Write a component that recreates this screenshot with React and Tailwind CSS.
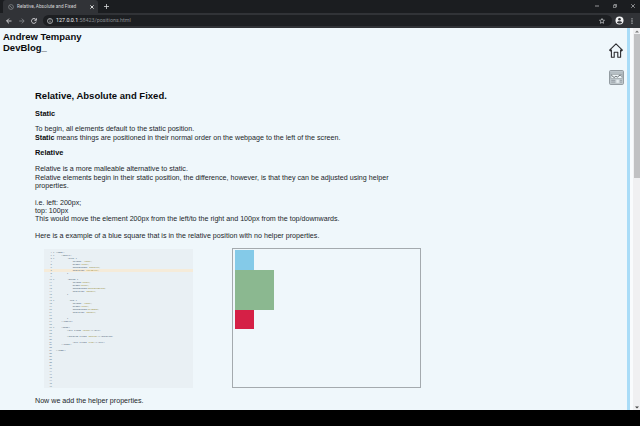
import React from "react";

const CODE = [
  [0, "<html>"],
  [4, "<style>"],
  [8, ".blue {"],
  [12, "height:", " 100px;"],
  [12, "width:", "100px;"],
  [12, "background:", " skyblue;"],
  [12, "position:", " relative;"],
  [8, "}"],
  null,
  [8, ".green {"],
  [12, "height:", "200px;"],
  [12, "width:", "200px;"],
  [12, "background:", "darkseagreen;"],
  [12, "position:", " static;"],
  [8, "}"],
  null,
  [9, ".red {"],
  [12, "height:", " 100px;"],
  [12, "width:", "100px;"],
  [12, "background:", "crimson;"],
  [12, "position:", " static;"],
  null,
  [8, "}"],
  [4, "</style>"],
  null,
  [4, "<body>"],
  [8, "<div class=", '"blue"', "></div>"],
  null,
  [8, "<section class=", '"green"', "></section>"],
  null,
  [12, "<div class=", '"red"', "></div>"],
  [4, "</body>"],
  null,
  [0, "</html>"],
];
const FOLDS = [1, 2, 3, 10, 17, 26];
const ROWS = Array.from({ length: 46 }, (_, i) => CODE[i] || null);

function CodeListing() {
  return (
    <div className="w-[149px] h-[139px] bg-[#e9f0f4] mt-[0.5px] pt-[2.5px] overflow-hidden font-['Liberation_Mono',monospace] text-[2.32px] leading-[2.98px]">
      {ROWS.map((row, i) => (
        <div key={i} className={`flex h-[2.98px] whitespace-pre ${i === 6 ? "bg-[#f5ebd9]" : ""}`}>
          <span className="w-[8px] text-right text-[#566f83]">{i + 1}</span>
          <span className="w-[4px] pl-[1px] text-[#566f83]">{FOLDS.includes(i + 1) ? "▾" : ""}</span>
          {row && (
            <span className="text-[#2c455a]">
              {" ".repeat(row[0])}
              {row[1]}
              <span className="text-[#8d7c10]">{row[2]}</span>
              {row[3]}
            </span>
          )}
        </div>
      ))}
    </div>
  );
}

function HomeIcon() {
  return (
    <svg width="14" height="15" viewBox="0 0 14 15" fill="none" stroke="#2b2b2f" strokeWidth="1.1" strokeLinejoin="round">
      <path d="M.6 7.1 7 .8l6.4 6.3-.8.8-1-.9v7.3H8.8V9.2H5.2v5.1H2.4V7l-1 .9z" />
    </svg>
  );
}

function BlogIcon() {
  return (
    <svg width="15" height="15" viewBox="0 0 15 15" fill="none">
      <rect x=".6" y=".6" width="13.8" height="13.8" rx=".8" fill="#c3ccd1" stroke="#8c949a" />
      <path d="M1 3h13" stroke="#959ea4" strokeWidth=".6" />
      <rect x="2" y="4.3" width="11" height="4.4" fill="#edf4f7" stroke="#7a8288" strokeWidth=".5" />
      <path d="m2.3 5.2 2.8 2.3 1.8-1.2 1.5.8 2.8-2.2 1.5 1.6" stroke="#4c5358" strokeWidth=".8" />
      <path d="M2.2 10.3h4M2.2 12.1h4M11 10.3h2M11 12.1h2" stroke="#828a90" strokeWidth=".7" />
      <rect x="7.4" y="9.8" width="2.4" height="3" fill="#e6edf0" />
    </svg>
  );
}

function Browser() {
  return (
    <header className="font-['Roboto','Noto_Sans',sans-serif]">
      <div className="flex h-[13px] bg-[#1b1d20] items-stretch">
        <div className="ml-[3px] w-[95px] bg-[#313337] rounded-t-[3px] flex items-center pl-[5px] pr-[4px]">
          <svg width="6" height="6" viewBox="0 0 6 6" fill="none" stroke="#777a7e" strokeWidth=".9">
            <circle cx="3" cy="3" r="2.4" />
            <path d="m1.3 1.3 3.4 3.4" />
          </svg>
          <span className="ml-[3px] w-[70px] whitespace-nowrap text-[4.75px] leading-[8px] text-[#d5d7da]">Relative, Absolute and Fixed</span>
          <svg className="ml-auto" width="4" height="4" viewBox="0 0 4 4" stroke="#eee" strokeWidth=".9">
            <path d="m.4.4 3.2 3.2M3.6.4.4 3.6" />
          </svg>
        </div>
        <div className="flex items-center pl-[6px]">
          <svg width="5" height="5" viewBox="0 0 5 5" stroke="#d4d6d8" strokeWidth=".8">
            <path d="M2.5 0v5M0 2.5h5" />
          </svg>
        </div>
        <div className="ml-auto flex items-center gap-[14px] pr-[5px] pb-[2px]">
          <svg width="4" height="4" viewBox="0 0 4 4" stroke="#c8c9cb" strokeWidth=".7"><path d="M0 2h4" /></svg>
          <svg width="4" height="4" viewBox="0 0 4 4" fill="none" stroke="#c8c9cb" strokeWidth=".6">
            <path d="M.4 1.2h2.4v2.4H.4zM1.3 1V.4h2.3v2.3H3" />
          </svg>
          <svg width="4" height="4" viewBox="0 0 4 4" stroke="#d8d9db" strokeWidth=".6"><path d="m.2.2 3.6 3.6M3.8.2.2 3.8" /></svg>
        </div>
      </div>
      <div className="flex h-[15px] bg-[#313337] items-center pl-[6px] pr-[4px]">
        <svg width="31" height="6" viewBox="0 0 31 6" fill="none" strokeWidth=".9">
          <path d="M5.5 3H.7M3 .6.6 3 3 5.4" stroke="#dcdde0" />
          <path d="M13.2 3H18M15.8.6 18.2 3l-2.4 2.4" stroke="#808388" />
          <path d="M29.8 1.5A2.4 2.4 0 1 0 30.2 3.6M30.4.3v2h-2" stroke="#dcdde0" />
        </svg>
        <div className="ml-[6px] mr-[-1px] flex-1 h-[11px] rounded-full bg-[#1d1f22] flex items-center pl-[4px] pr-[5px]">
          <svg width="6" height="6" viewBox="0 0 6 6" fill="none" stroke="#d6d8da" strokeWidth=".7">
            <circle cx="3" cy="3" r="2.5" />
            <path d="M3 1.3v.8M3 2.6v2" />
          </svg>
          <span className="ml-[3px] w-[75px] whitespace-nowrap text-[5.35px] leading-[9px] text-[#868a8e]">
            <span className="text-[#f0f1f2]">127.0.0.1</span>:58423/positions.html
          </span>
          <svg className="ml-auto mr-[2px]" width="6" height="6" viewBox="0 0 6 6" fill="none" stroke="#d0d2d5" strokeWidth=".7">
            <path d="m3 .5.75 1.6 1.75.2-1.3 1.2.35 1.8L3 4.4l-1.55.9.35-1.8L.5 2.3l1.75-.2z" />
          </svg>
        </div>
        <svg className="ml-[4px]" width="9" height="9" viewBox="0 0 9 9">
          <circle cx="4.5" cy="4.5" r="4" fill="#f1f2f3" />
          <circle cx="4.5" cy="3.3" r="1.3" fill="#303236" />
          <path d="M2 6.4c.7-1.4 4.3-1.4 5 0-.9 1.3-4.1 1.3-5 0" fill="#303236" />
        </svg>
        <svg className="ml-[7px] mr-[3px]" width="2" height="6" viewBox="0 0 2 6" fill="#d6d8da">
          <circle cx="1" cy=".8" r=".65" /><circle cx="1" cy="3" r=".65" /><circle cx="1" cy="5.2" r=".65" />
        </svg>
      </div>
    </header>
  );
}

export default function App() {
  return (
    <div className="w-[640px] h-[426px] overflow-hidden bg-black">
      <Browser />
      <div className="flex h-[382px] bg-[#eff7fb] font-['Liberation_Sans',Arial,sans-serif] text-[#22262a]">
        <main className="w-[600px] text-[7.13px] leading-[8.33px]">
          <h1 className="pl-[3px] pt-[3px] text-[9.5px] leading-[11px] font-bold text-[#0a0b0d]">
            Andrew Tempany<br />DevBlog_
          </h1>
          <div className="pl-[35px] whitespace-nowrap">
            <h2 className="mt-[37px] text-[9.53px] leading-[11px] h-[11px] font-bold text-[#0a0b0d]">Relative, Absolute and Fixed.</h2>
            <h3 className="mt-[8.5px] text-[7.4px] font-bold text-[#0a0b0d]">Static</h3>
            <p className="mt-[7.5px]">
              To begin, all elements default to the static position.<br />
              <b className="text-[#0a0b0d]">Static</b> means things are positioned in their normal order on the webpage to the left of the screen.
            </p>
            <h3 className="mt-[7.5px] text-[7.4px] font-bold text-[#0a0b0d]">Relative</h3>
            <p className="mt-[7.5px]">
              Relative is a more malleable alternative to static.<br />
              Relative elements begin in their static position, the difference, however, is that they can be adjusted using helper<br />
              properties.<br /><br />
              i.e. left: 200px;<br />
              top: 100px<br />
              This would move the element 200px from the left/to the right and 100px from the top/downwards.<br /><br />
              Here is a example of a blue square that is in the relative position with no helper properties.
            </p>
            <div className="mt-[8.2px] flex h-[140px] pl-[9px]">
              <CodeListing />
              <div className="ml-[39.4px] w-[188.5px] h-[140px] border border-[#a4aaae] pl-[1.2px] pt-[1px]">
                <div className="w-[19.7px] h-[19.7px] bg-[#84cae8]" />
                <div className="w-[39.4px] h-[39.4px] bg-[#8bb890]" />
                <div className="w-[19.7px] h-[19.7px] bg-[#d52046]" />
              </div>
            </div>
            <p className="mt-[9px]">Now we add the helper properties.</p>
          </div>
        </main>
        <nav className="w-[27px] flex flex-col items-center pt-[15px] gap-[12px] pl-[5px]">
          <HomeIcon />
          <BlogIcon />
        </nav>
        <div className="w-[3px] bg-[#a9dcf7]" />
        <div className="w-[3px] bg-[#f9fbfd]" />
        <div className="w-[7px] bg-[#f0f0f2] flex flex-col items-center">
          <svg className="mt-[2px]" width="4" height="3" viewBox="0 0 4 3" fill="#777"><path d="M0 2.5 2 .5l2 2z" /></svg>
          <div className="mt-[1px] w-[6px] h-[144px] bg-[#c1c1c3]" />
          <svg className="mt-auto mb-[1px]" width="4" height="3" viewBox="0 0 4 3" fill="#444"><path d="M0 .5h4l-2 2z" /></svg>
        </div>
      </div>
    </div>
  );
}
